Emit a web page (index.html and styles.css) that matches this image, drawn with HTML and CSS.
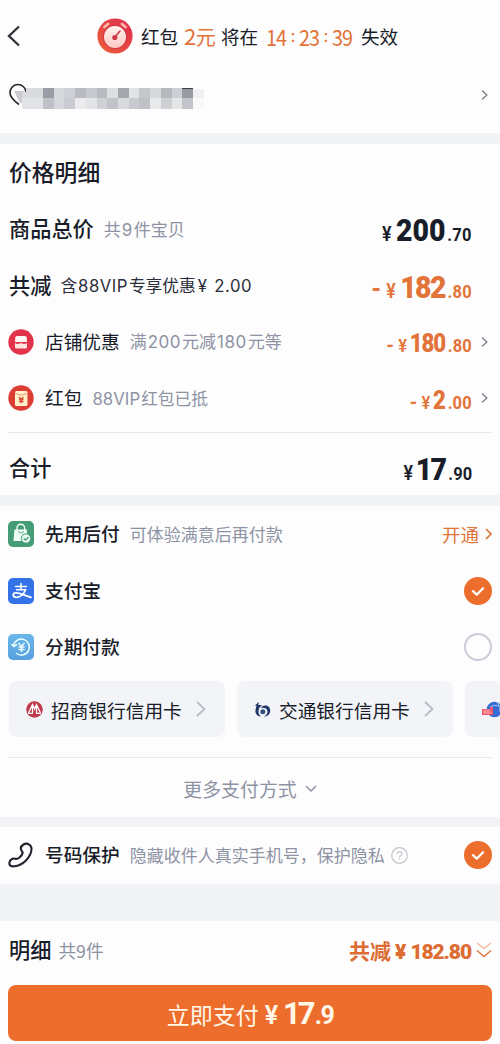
FILE: index.html
```html
<!DOCTYPE html>
<html lang="zh-CN">
<head>
<meta charset="utf-8">
<meta name="viewport" content="width=device-width, initial-scale=1">
<title>确认订单</title>
<link rel="stylesheet" href="styles.css">
</head>
<body>
<main class="page">
  <section class="card top">
    <header class="notice">
      <svg class="back" width="14" height="22" viewBox="0 0 14 22"><path d="M12 1.500 2 11l10 9.500"/></svg>
      <svg class="timer" width="36" height="36" viewBox="0 0 36 36">
        <defs>
          <linearGradient id="ring" x1="1" y1="0" x2="0" y2="1"><stop offset="0" stop-color="#df2d50"/><stop offset="1" stop-color="#ec6038"/></linearGradient>
          <linearGradient id="dial" x1="0" y1="0" x2="0" y2="1"><stop offset="0" stop-color="#fff3f0"/><stop offset="1" stop-color="#ffc9c4"/></linearGradient>
        </defs>
        <circle cx="18" cy="18" r="17.600" fill="url(#ring)"/>
        <circle cx="18" cy="19" r="12.500" fill="#c72f3d" opacity=".45"/>
        <path d="m7.500 9 3.500-3M25 6l3.500 3" stroke="#ffb3ad" stroke-width="2.800" stroke-linecap="round"/>
        <circle cx="18" cy="19" r="11" fill="url(#dial)"/>
        <path d="m18 19 5-6" stroke="#c63b49" stroke-width="1.600" stroke-linecap="round"/>
        <circle cx="17.800" cy="19.500" r="2.600" fill="#cf3a49"/>
      </svg>
      <span class="n1">红包</span><span class="n2 hot"><i class="amt">2</i>元</span><span class="n3">将在</span><span class="clock hot"><i>14</i><b>:</b><i>23</i><b>:</b><i>39</i></span><span class="n4">失效</span>
    </header>
    <div class="address">
      <svg width="200" height="26" viewBox="0 0 200 26">
        <path d="M11 21.500C5 17 2 14 2 10a8 8 0 0 1 16-1" fill="none" stroke="#25272d" stroke-width="1.600"/>
        <path d="M6 8h10v12h-4z" fill="#c9cbcf"/>
        <g shape-rendering="crispEdges">
          <path d="M18 5h17v10H14V9h4z" fill="#d8dadd"/><path d="M14 15h21v11H14z" fill="#e2e3e6"/>
          <path d="M35 5h11v10H35z" fill="#999da6"/><path d="M35 15h11v11H35z" fill="#bfc1c7"/>
          <path d="M46 5h10v10H46z" fill="#d7d8dc"/><path d="M46 15h10v11H46z" fill="#d6d7dc"/>
          <path d="M56 5h11v10H56z" fill="#cfd0d5"/><path d="M56 15h11v11H56z" fill="#cbccd1"/>
          <path d="M67 5h11v10H67z" fill="#b9bbc1"/><path d="M67 15h11v11H67z" fill="#ececee"/>
          <path d="M78 5h11v10H78z" fill="#c9cacf"/><path d="M78 15h11v11H78z" fill="#e3e4e7"/>
          <path d="M89 5h10v10H89z" fill="#b9bbc0"/><path d="M89 15h10v11H89z" fill="#cfd1d5"/>
          <path d="M99 5h11v10H99z" fill="#dedfe3"/><path d="M99 15h11v11H99z" fill="#c2c4ca"/>
          <path d="M110 5h11v10h-11z" fill="#a5a7ae"/><path d="M110 15h11v11h-11z" fill="#d9dade"/>
          <path d="M121 5h10v10h-10z" fill="#e2e3e7"/><path d="M121 15h10v11h-10z" fill="#c8cacf"/>
          <path d="M131 5h11v10h-11z" fill="#c5c7cc"/><path d="M131 15h11v11h-11z" fill="#bfc1c6"/>
          <path d="M142 5h11v10h-11z" fill="#d7d8dc"/><path d="M142 15h11v11h-11z" fill="#e8e9eb"/>
          <path d="M153 5h11v10h-11z" fill="#b6b8bd"/><path d="M153 15h11v11h-11z" fill="#cfd0d4"/>
          <path d="M164 5h10v10h-10z" fill="#cecfd4"/><path d="M164 15h10v11h-10z" fill="#e5e6e8"/>
          <path d="M174 5h11v10h-11z" fill="#999ba2"/><path d="M174 15h11v11h-11z" fill="#c4c5ca"/>
          <path d="M174 5h11v1h-11z" fill="#3c3e44"/><path d="M185 6h11v9h-11z" fill="#f0f0f2"/><path d="M185 15h11v11h-11z" fill="#f9f9fa"/>
        </g>
      </svg>
      <svg class="chev" width="7" height="12" viewBox="0 0 7 12"><path d="m1 1.500 4.800 4.500L1 10.500"/></svg>
    </div>
  </section>

  <section class="card detail">
    <h1 class="heading">价格明细</h1>
    <div class="row"><span class="label big">商品总价</span><span class="sub goods">共<i>9</i>件宝贝</span>
      <span class="price xl"><i>¥</i><b>200</b><em>.70</em></span></div>
    <div class="row"><span class="label big">共减</span><span class="sub dark vip">含<i>88VIP</i>专享优惠<i class="yen">¥</i><i>2.00</i></span>
      <span class="price xl hot tight"><u>-</u><i>¥</i><b>182</b><em>.80</em></span></div>
    <div class="row">
      <svg class="icon" width="26" height="26" viewBox="0 0 26 26"><circle cx="13" cy="13" r="12.700" fill="#e1344b"/><path d="M9 7h8q1.500 0 1.700 1.500L19 13H7l.3-4.500Q7.500 7 9 7z" fill="#fff5f3"/><path d="M7 14c2 1.500 4 1 6 0 2 1 4 1.500 6 0v4q0 1.500-1.500 1.500h-9Q7 19.500 7 18z" fill="#ffe4e2"/></svg>
      <span class="label">店铺优惠</span><span class="sub shop">满<i>200</i>元减<i>180</i>元等</span>
      <span class="price md hot tight"><u>-</u><i>¥</i><b>180</b><em>.80</em></span>
      <svg class="chev" width="7" height="12" viewBox="0 0 7 12"><path d="m1 1.500 4.800 4.500L1 10.500"/></svg></div>
    <div class="row">
      <svg class="icon" width="26" height="26" viewBox="0 0 26 26"><circle cx="13" cy="13" r="12.700" fill="#dc3d35"/><rect x="7" y="6" width="12.500" height="15" rx="1.500" fill="#fff0ca"/><path d="M7 8.500q6 3 12.500 0" fill="none" stroke="#e79a77"/><path d="m11 12 2.200 2.500 2.200-2.500M11 14.500h4.500M11 16.500h4.500M13.200 14v4" fill="none" stroke="#d94938" stroke-width="1.300"/></svg>
      <span class="label">红包</span><span class="sub packet"><i>88VIP</i>红包已抵</span>
      <span class="price md hot"><u>-</u><i>¥</i><b>2</b><em>.00</em></span>
      <svg class="chev" width="7" height="12" viewBox="0 0 7 12"><path d="m1 1.500 4.800 4.500L1 10.500"/></svg></div>
    <div class="row total"><span class="label big">合计</span><span class="price xl tight sum"><i>¥</i><b>17</b><em>.90</em></span></div>
  </section>

  <section class="card payment">
    <div class="row">
      <svg class="icon" width="26" height="26" viewBox="0 0 26 26"><rect width="26" height="26" rx="5" fill="#469c77"/><path d="M9 9V7a3.800 3.800 0 0 1 7.600 0v2" fill="none" stroke="#eefff6" stroke-width="1.400"/><path d="M6.500 8.500h12.300l.7 11.500H5.500z" fill="#effff7"/><path d="M10 10.500q3 3 6 0" fill="none" stroke="#63aa8b"/><circle cx="18" cy="17.500" r="4.700" fill="#eafaf2" stroke="#469c77" stroke-width="1"/><path d="m15.700 17.500 1.800 1.700 3-3" fill="none" stroke="#469c77" stroke-width="1.300"/></svg>
      <span class="label mid">先用后付</span><span class="sub">可体验满意后再付款</span>
      <span class="open">开通<svg class="chev" width="7" height="12" viewBox="0 0 7 12"><path d="m1 1 5 5-5 5"/></svg></span></div>
    <div class="row">
      <svg class="icon" width="26" height="26" viewBox="0 0 26 26"><rect width="26" height="26" rx="5" fill="#3472e8"/><g fill="none" stroke="#fff" stroke-linecap="round"><path d="M7.500 8.500h11M13 5.500v6M8.500 11.800h9" stroke-width="1.500"/><path d="M17.500 11.800c-1.500 4-5 7.500-9 7.500-4.500 0-4-4.500-.5-4.500 4.500 0 8.500 2.800 15 4.500" stroke-width="1.800"/></g></svg>
      <span class="label mid">支付宝</span>
      <svg class="check" width="28" height="28" viewBox="0 0 28 28"><circle cx="14" cy="14" r="14"/><path d="m9 14.200 3.700 3.500 6.400-6.400"/></svg></div>
    <div class="row">
      <svg class="icon" width="26" height="26" viewBox="0 0 26 26"><defs><linearGradient id="sky" x2="0" y2="1"><stop stop-color="#69b8e7"/><stop offset="1" stop-color="#579fe1"/></linearGradient></defs><rect width="26" height="26" rx="5" fill="url(#sky)"/><g fill="none" stroke="#eaffff" stroke-width="1.500"><path d="M5.500 11.500A8 8 0 1 1 8 19M3.500 10l2.300 2.500L9 10.500"/><path d="m10.500 9 3 3.500 3-3.500M10.500 13h6M10.500 15.500h6M13.500 12.500V18" stroke-width="1.400"/></g></svg>
      <span class="label mid">分期付款</span><span class="radio"></span></div>
    <div class="banks">
      <div class="bank"><svg width="17" height="17" viewBox="0 0 17 17"><circle cx="8.500" cy="8.500" r="8.300" fill="#bd3a48"/><path d="M2.500 12 6.500 3.500l2 4.500 2-4.500 4 8.500M6.500 5v7M10.500 5v7M2 12.300h5M10 12.300h5" fill="none" stroke="#fff" stroke-width="1.300"/></svg><span>招商银行信用卡</span><svg class="arrow" width="10" height="16" viewBox="0 0 10 16"><path d="m1 1 7.500 7L1 15"/></svg></div>
      <div class="bank"><svg width="17" height="17" viewBox="0 0 17 17"><path d="M.8 4.500 4.800 1 4.300 4H8L5.500 6.500C4 10 4 13 7 15.500c-4 0-6-3-5.500-6.500l1-4.500z" fill="#1f3768"/><path d="M6.500 7c3.500-4.500 9.700-2.500 9.700 2.500 0 3.500-2.200 6-6.200 6 3-1.500 4.200-4 3.200-6.200-1-2.300-3.700-2.800-6.700-2.300z" fill="#1f3768"/><circle cx="8.800" cy="10.800" r="2.500" fill="#304d7d"/></svg><span>交通银行信用卡</span><svg class="arrow" width="10" height="16" viewBox="0 0 10 16"><path d="m1 1 7.500 7L1 15"/></svg></div>
      <div class="bank last"><svg width="19" height="17" viewBox="0 0 19 17"><circle cx="12.500" cy="8.500" r="7.800" fill="#376bd3"/><path d="M8 6q4-3 9-1M15 1q4 4 3 10" fill="none" stroke="#aac6ff"/><path d="M0 8h8V6h3v8H0z" fill="#ee5266"/><path d="M1 10h8M3 8v5M6 8v5M1 12h9" stroke="#ffb2b5" stroke-width=".8"/></svg></div>
    </div>
    <div class="more"><span>更多支付方式</span><svg width="12" height="8" viewBox="0 0 12 8"><path d="m1 1 5 5 5-5"/></svg></div>
  </section>

  <section class="card privacy">
    <div class="row">
      <svg class="icon" width="26" height="26" viewBox="0 0 26 26"><path d="M15.500 2.500c3.500-2.100 8 .2 8 4.300-.1 8.500-9 16.600-17 17.500-3.700.5-5.500-1.300-5.100-3.600.3-2.600 3.100-4.800 5.800-4 1.700.5 2.500.2 4-1 2.600-2.200 3.600-3.700 3.400-5.200-.2-1-1-1.600-1.500-2.800-.7-1.900.4-4 2.400-5.200z" fill="none" stroke="#20232b" stroke-width="2.100"/></svg>
      <span class="label mid">号码保护</span><span class="sub">隐藏收件人真实手机号，保护隐私</span>
      <svg class="help" width="17" height="17" viewBox="0 0 17 17"><circle cx="8.500" cy="8.500" r="7.800"/><path d="M6.200 7c0-3.300 4.800-3.200 4.800-.4 0 1.800-2.500 1.900-2.500 3.900M8.500 11.500v1.300"/></svg>
      <svg class="check" width="28" height="28" viewBox="0 0 28 28"><circle cx="14" cy="14" r="14"/><path d="m9 14.200 3.700 3.500 6.400-6.400"/></svg></div>
  </section>

  <footer class="card footer">
    <div class="summary"><span class="label big">明细</span><span class="count">共<i>9</i>件</span>
      <span class="saved"><span>共减</span><b>¥</b><strong>182.80</strong></span>
      <svg width="16" height="17" viewBox="0 0 16 17"><path d="m1 1 7 5.500L15 1" stroke="#f2bd9f"/><path d="m1 8.500 7 6 7-6" stroke="#e27b43"/></svg></div>
    <button class="pay"><span>立即支付</span><i>¥</i><b>17</b><em>.9</em></button>
  </footer>
</main>
</body>
</html>
```
FILE: styles.css
```css
* { box-sizing: border-box; }
body {
  margin: 0;
  background: #f1f3f7;
  color: #191c29;
  font-family: "Inter", "Noto Sans CJK SC", sans-serif;
}
i, em, u { font-style: normal; text-decoration: none; }
svg { flex: none; display: block; }
.page { width: 500px; height: 1044px; overflow: hidden; display: flex; flex-direction: column; }
.card { background: #fdfdfe; flex: none; }
.hot { color: #e27339; }

/* Countdown and address */
.top { height: 133px; margin-bottom: 11px; }
.notice { height: 72px; display: flex; align-items: center; padding-left: 7px; font-size: 18.6px; line-height: 28px; white-space: nowrap; }
.notice > span { padding-top: 2px; }
.notice .hot { padding-top: 0; }
.notice i { font-family: "Noto Sans CJK SC", sans-serif; }
.back path { fill: none; stroke: #33353a; stroke-width: 2.4; }
.timer { margin-left: 76px; }
.n1 { width: 43px; margin-left: 8px; }
.n2 { width: 37px; font-size: 20px; }
.n2 .amt { font-size: 22px; letter-spacing: -.5px; }
.n3 { width: 45px; }
.clock { width: 95px; display: flex; font-size: 22px; }
.clock i { display: block; width: 21px; transform: scaleX(.9); transform-origin: left; letter-spacing: -1px; }
.clock b { width: 12px; font-size: 17px; font-weight: 400; text-align: center; }
.address { display: flex; align-items: center; justify-content: space-between; height: 48px; padding: 0 12px 0 8px; }
.address .chev { margin-bottom: 3px; }
.chev path { fill: none; stroke: #81848d; stroke-width: 1.4; }

/* Shared rows */
.row { height: 56.4px; display: flex; align-items: center; padding: 0 8px 0 9px; white-space: nowrap; }
.icon { margin: 0 11px 0 -1px; }
.label { padding-top: 2px; font-size: 18.7px; line-height: 28px; }
.label.mid { font-weight: 500; }
.label.big { font-size: 21.2px; font-weight: 500; padding-top: 0; }
.sub { margin-left: 10px; padding-top: 1px; color: #8d93a3; font-size: 17px; line-height: 26px; }
.sub.dark { color: #2b2e3a; }
.sub i { letter-spacing: .5px; margin: 0 1px; }

/* Price breakdown */
.detail { height: 351px; margin-bottom: 11px; }
.heading { height: 57px; margin: 0; padding: 1px 0 0 9px; font-size: 22.8px; line-height: 56px; font-weight: 500; }
.sub.vip { font-size: 16.7px; margin-left: 9px; }
.vip .yen { margin: 0 6px 0 2px; }
.packet { font-size: 16.7px; margin-left: 9px; }
.sub.packet i { letter-spacing: .1px; }
.price { margin-left: auto; margin-right: 20px; padding-top: 7px; display: flex; align-items: baseline; font-family: "Roboto", sans-serif; font-weight: 700; line-height: 36px; transform: scaleX(.89); transform-origin: right; }
.price u { font-size: 27px; margin-right: 6px; }
.price i { font-size: 20px; margin-right: 5px; font-weight: 600; }
.price b { font-size: 32px; }
.price em { font-size: 18.5px; margin-left: 2px; letter-spacing: .2px; }
.price.md b { font-size: 25px; }
.price.md i { font-size: 18.5px; margin-right: 3px; }
.price.md u { font-size: 21px; margin-right: 5px; }
.price.tight b { letter-spacing: -1.8px; }
.price.md.tight b { letter-spacing: -1.3px; }
.price.tight em { margin-left: 3px; }
.price.sum { padding-top: 7px; }
.price.sum i { margin-right: 3px; }
.price ~ .chev { margin-left: -11px; margin-right: 4px; }
.total { margin: 5px 8px 0; padding: 0 0 0 1px; height: 71px; border-top: 1px solid #e8e9ed; }

/* Payment methods */
.payment { height: 311px; margin-bottom: 10px; overflow: hidden; }
.open { display: flex; align-items: center; gap: 6px; margin-left: auto; color: #e27339; font-size: 18.5px; }
.open .chev path { stroke: #e27339; stroke-width: 1.7; }
.check { margin-left: auto; }
.check circle { fill: #ed6d2d; }
.check path { fill: none; stroke: #fff; stroke-width: 2.3; stroke-linecap: round; stroke-linejoin: round; }
.radio { width: 28px; height: 28px; margin-left: auto; border: 2.5px solid #cbcdd6; border-radius: 50%; }
.banks { display: flex; gap: 12px; margin: 6px 0 0 9px; }
.bank { flex: none; width: 216px; height: 56px; display: flex; align-items: center; padding-left: 17px; border-radius: 8px; background: #f2f4f8; font-size: 18.7px; white-space: nowrap; }
.bank span { margin-left: 8px; }
.arrow { margin-left: 14px; }
.arrow path { fill: none; stroke: #b7bbc5; stroke-width: 1.8; }
.more { margin: 20px 8px 0; height: 62px; border-top: 1px solid #e8e9ed; display: flex; align-items: center; justify-content: center; gap: 8px; color: #8d93a3; font-size: 18.9px; }
.more svg path { fill: none; stroke: #8d93a3; stroke-width: 1.5; }

/* Number protection */
.privacy { height: 57px; margin-bottom: 37px; }
.help { margin-left: 6px; }
.help circle, .help path { fill: none; stroke: #c3c5cb; stroke-width: 1.2; }

/* Checkout */
.footer { height: 123px; }
.summary { display: flex; align-items: center; height: 64px; padding: 0 8px 6px 9px; }
.count { margin-left: 7px; color: #8d93a3; font-size: 17.7px; }
.count i { font-family: "Noto Sans CJK SC", sans-serif; }
.saved { display: flex; align-items: baseline; margin-left: auto; margin-right: 5px; color: #dc6c32; font-weight: 700; font-size: 21px; }
.saved b, .saved strong { font-family: "Roboto", sans-serif; }
.saved b { margin: 0 4px; }
.saved strong { font-size: 21px; letter-spacing: -1.1px; }
.summary path { fill: none; stroke-width: 1.5; }
.pay { width: 484px; height: 56px; margin: 0 8px; padding: 0; border: 0; border-radius: 8px; background: #ed6d2d; color: #fff8e9; display: flex; align-items: baseline; justify-content: center; font-family: "Roboto", "Noto Sans CJK SC", sans-serif; line-height: 57px; font-size: 23px; }
.pay i { margin: 0 5px 0 6px; font-size: 25px; font-weight: 600; }
.pay b { font-size: 31px; letter-spacing: -3px; }
.pay em { font-size: 25px; font-weight: 700; letter-spacing: -1.5px; margin-left: 2px; }
```
